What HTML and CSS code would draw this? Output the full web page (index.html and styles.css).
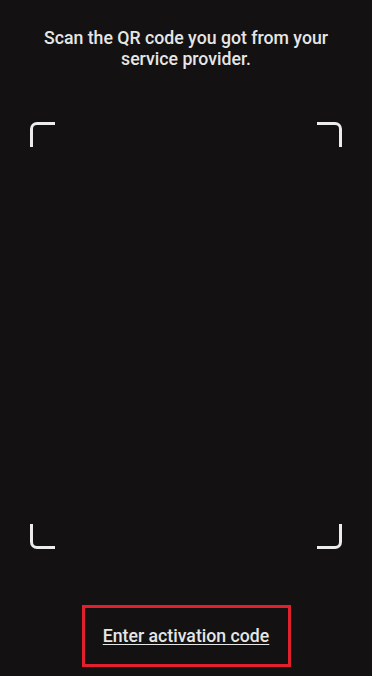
FILE: index.html
```html
<!DOCTYPE html>
<html lang="en">
<head>
<meta charset="utf-8">
<title>Scan QR code</title>
<link rel="stylesheet" href="styles.css">
</head>
<body>
<main class="screen">
  <p class="hint">Scan the QR code you got from your service provider.</p>
  <div class="frame">
    <span class="corner tl"></span>
    <span class="corner tr"></span>
    <span class="corner bl"></span>
    <span class="corner br"></span>
  </div>
  <div class="action">
    <a class="link" href="#">Enter activation code</a>
  </div>
</main>
</body>
</html>
```

FILE: styles.css
```css
html, body {
  margin: 0;
  padding: 0;
  background: #131111;
}
.screen {
  width: 372px;
  height: 676px;
  display: flex;
  flex-direction: column;
  align-items: center;
  font-family: Roboto, "Noto Sans", sans-serif;
  background: #131111;
}
.hint {
  margin: 28px 0 0;
  width: 300px;
  text-align: center;
  color: #e6e6e6;
  font-size: 17.7px;
  font-weight: 500;
  line-height: 20.5px;
}
.frame {
  position: relative;
  margin-top: 53px;
  width: 312px;
  height: 427px;
}
.corner {
  position: absolute;
  width: 22px;
  height: 22px;
  border: 0 solid #ececec;
}
.tl { left: 0; top: 0; border-left-width: 3px; border-top-width: 3px; border-top-left-radius: 7px; }
.tr { right: 0; top: 0; border-right-width: 3px; border-top-width: 3px; border-top-right-radius: 7px; }
.bl { left: 0; bottom: 0; border-left-width: 3px; border-bottom-width: 3px; border-bottom-left-radius: 7px; }
.br { right: 0; bottom: 0; border-right-width: 3px; border-bottom-width: 3px; border-bottom-right-radius: 7px; }
.action {
  margin-top: 56px;
  width: 203px;
  height: 56px;
  border: 3px solid #e0202c;
  display: flex;
  align-items: center;
  justify-content: center;
}
.link {
  color: #e6e6e6;
  font-size: 17.7px;
  font-weight: 500;
  text-decoration: underline;
  text-underline-offset: 2px;
}
```
